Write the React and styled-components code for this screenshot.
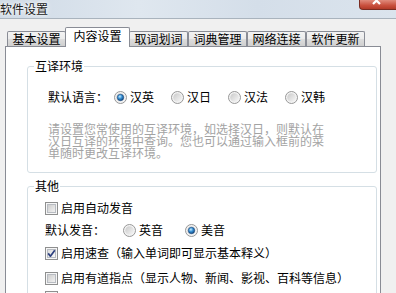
import React from "react";
import styled, { createGlobalStyle } from "styled-components";

const Global = createGlobalStyle`
  html, body { margin: 0; padding: 0; }
  body {
    width: 396px; height: 293px; overflow: hidden;
    background: #f0f0f0;
    font-family: "Noto Sans CJK SC", "Noto Sans", sans-serif;
    font-size: 12px;
    color: #000;
  }
`;

const Window = styled.div`
  width: 396px;
  height: 293px;
  overflow: hidden;
  position: relative;
  background: #f0f0f0;
`;

const TitleBar = styled.div`
  height: 18px;
  border-bottom: 1px solid #a9b3bd;
  background: linear-gradient(90deg, #cfdae6 0%, #dfe7ef 35%, #d4dee9 65%, #dbe4ed 100%);
  display: flex;
  align-items: center;
`;

const Title = styled.span`
  line-height: 18px;
  font-size: 12px;
  color: #1a1a1a;
  text-shadow: 0 0 6px #fff, 0 0 3px #fff;
`;

const CloseButton = styled.div`
  position: absolute;
  top: 0;
  right: 0;
  width: 36px;
  height: 9px;
  border: 1px solid #7a2c22;
  border-top: none;
  border-right: none;
  border-radius: 0 0 0 4px;
  background: linear-gradient(180deg, #e08b7c 0%, #c9503e 60%, #b23a28 100%);
  overflow: hidden;
  display: flex;
  justify-content: center;
`;

const Client = styled.div`
  padding: 8px 15px 0 5px;
`;

const TabStrip = styled.div`
  display: flex;
  align-items: flex-end;
  height: 20px;
  padding-left: 2px;
  margin-bottom: -1px;
  position: relative;
  z-index: 1;
`;

const Tab = styled.div`
  box-sizing: border-box;
  width: ${(p) => (p.$active ? 65 : 59)}px;
  height: ${(p) => (p.$active ? 20 : 15)}px;
  margin: ${(p) => (p.$active ? "0 -1px 0 -1px" : "0 0 1px 0")};
  border: 1px solid #898c95;
  border-bottom: none;
  border-radius: 2px 2px 0 0;
  background: ${(p) =>
    p.$active ? "#fff" : "linear-gradient(180deg, #f3f3f3 0%, #ebebeb 50%, #dddddd 51%, #cfcfcf 100%)"};
  text-align: center;
  line-height: ${(p) => (p.$active ? "12px" : "14px")};
  padding-top: ${(p) => (p.$active ? "2px" : "0")};
  position: relative;
  z-index: ${(p) => (p.$active ? 2 : 1)};
  white-space: nowrap;
`;

const Panel = styled.div`
  width: 376px;
  box-sizing: border-box;
  height: 260px;
  border: 1px solid #898c95;
  background: #fff;
  padding: 19px 3px 0 21px;
`;

const Group = styled.div`
  border: 1px solid #d5dfe5;
  border-radius: 3px;
  margin-top: ${(p) => p.$top || 0}px;
  padding-bottom: ${(p) => p.$bottom || 0}px;
`;

const Legend = styled.div`
  width: fit-content;
  margin: -7px 0 0 6px;
  padding: 0 1px;
  background: #fff;
  line-height: 12px;
`;

const Body = styled.div`
  padding-left: ${(p) => p.$indent}px;
  display: flex;
  flex-direction: column;
`;

const Row = styled.div`
  display: flex;
  align-items: center;
  height: 16px;
  line-height: 16px;
  margin-top: ${(p) => p.$top || 0}px;
  white-space: nowrap;
`;

const Label = styled.span`
  margin-right: ${(p) => p.$gap}px;
`;

const RadioGroup = styled.div`
  display: flex;
  align-items: center;
  gap: ${(p) => p.$gap}px;
`;

const Option = styled.label`
  display: flex;
  align-items: center;
  gap: 3px;
`;

const Description = styled.div`
  margin-top: 18px;
  width: 282px;
  line-height: 12px;
  color: #a3a3a3;
`;

const Radio = ({ checked }) => (
  <svg width="13" height="13" viewBox="0 0 13 13">
    <defs>
      <linearGradient id="rOuter" x1="0" y1="0" x2="1" y2="1">
        <stop offset="0" stopColor="#c9c9c9" />
        <stop offset="1" stopColor="#f7f7f7" />
      </linearGradient>
      <radialGradient id="rDot" cx="0.4" cy="0.35" r="0.7">
        <stop offset="0" stopColor="#c8ecff" />
        <stop offset="0.45" stopColor="#3a93d6" />
        <stop offset="1" stopColor="#0c3d73" />
      </radialGradient>
    </defs>
    <circle cx="6.5" cy="6.5" r="6" fill="#f3f3f3" stroke="#979797" />
    <circle cx="6.5" cy="6.5" r="4.3" fill="url(#rOuter)" />
    {checked && <circle cx="6.5" cy="6.5" r="3.2" fill="url(#rDot)" stroke="#17477e" strokeWidth="0.6" />}
  </svg>
);

const Check = ({ checked }) => (
  <svg width="13" height="13" viewBox="0 0 13 13">
    <defs>
      <linearGradient id="cIn" x1="0" y1="0" x2="1" y2="1">
        <stop offset="0" stopColor="#cbcbcb" />
        <stop offset="1" stopColor="#f4f4f4" />
      </linearGradient>
      <linearGradient id="cInOn" x1="0" y1="0" x2="1" y2="1">
        <stop offset="0" stopColor="#dcdcdc" />
        <stop offset="1" stopColor="#fafafa" />
      </linearGradient>
    </defs>
    <rect x="0.5" y="0.5" width="12" height="12" fill="#f6f6f6" stroke="#8e8f8f" />
    <rect x="2.5" y="2.5" width="8" height="8" fill={checked ? "url(#cInOn)" : "url(#cIn)"} stroke="#b8bcc2" />
    {checked && (
      <path d="M3.2 6.4 L5.4 9.2 L9.8 3.3" fill="none" stroke="#2c3f7e" strokeWidth="1.7" strokeLinejoin="round" />
    )}
  </svg>
);

const CheckRow = ({ checked, top, children }) => (
  <Row $top={top}>
    <Option>
      <Check checked={checked} />
      {children && <span>{children}</span>}
    </Option>
  </Row>
);

export default function App() {
  const langs = ["汉英", "汉日", "汉法", "汉韩"];
  return (
    <Window>
      <Global />
      <TitleBar>
        <Title>软件设置</Title>
      </TitleBar>
      <CloseButton>
        <svg width="14" height="9" viewBox="0 0 14 9">
          <path d="M2 -3 L9 4 M9 -3 L2 4" stroke="#fff" strokeWidth="2.2" />
        </svg>
      </CloseButton>
      <Client>
        <TabStrip>
          {["基本设置", "内容设置", "取词划词", "词典管理", "网络连接", "软件更新"].map((t, i) => (
            <Tab key={t} $active={i === 1}>
              {t}
            </Tab>
          ))}
        </TabStrip>
        <Panel>
          <Group $bottom={13}>
            <Legend>互译环境</Legend>
            <Body $indent={20}>
              <Row $top={17}>
                <Label $gap={6}>默认语言：</Label>
                <RadioGroup $gap={17}>
                  {langs.map((l, i) => (
                    <Option key={l}>
                      <Radio checked={i === 0} />
                      <span>{l}</span>
                    </Option>
                  ))}
                </RadioGroup>
              </Row>
              <Description>
                请设置您常使用的互译环境，如选择汉日，则默认在汉日互译的环境中查询。您也可以通过输入框前的菜单随时更改互译环境。
              </Description>
            </Body>
          </Group>
          <Group $top={13}>
            <Legend>其他</Legend>
            <Body $indent={17}>
              <CheckRow top={8}>启用自动发音</CheckRow>
              <Row $top={6}>
                <Label $gap={18}>默认发音：</Label>
                <RadioGroup $gap={22}>
                  <Option>
                    <Radio />
                    <span>英音</span>
                  </Option>
                  <Option>
                    <Radio checked />
                    <span>美音</span>
                  </Option>
                </RadioGroup>
              </Row>
              <CheckRow checked top={7}>启用速查（输入单词即可显示基本释义）</CheckRow>
              <CheckRow top={9}>启用有道指点（显示人物、新闻、影视、百科等信息）</CheckRow>
              <CheckRow top={3} />
            </Body>
          </Group>
        </Panel>
      </Client>
    </Window>
  );
}
